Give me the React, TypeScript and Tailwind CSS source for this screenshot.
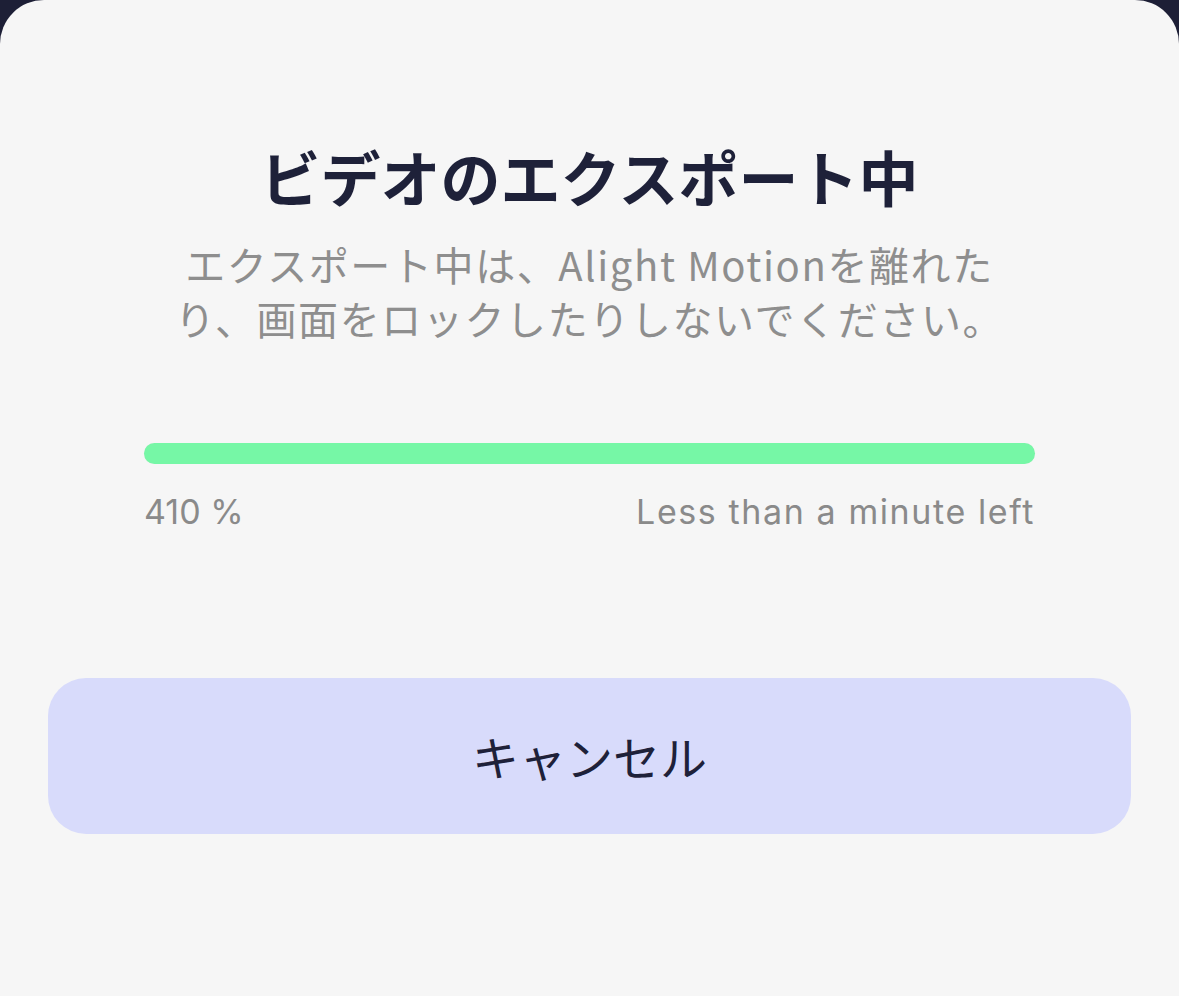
export default function App() {
  const progress = 100;
  return (
    <div className="h-[996px] w-full bg-[#1d1f36]">
      <div className="flex h-full w-full flex-col items-center rounded-t-[44px] bg-[#f6f6f6] pt-[141px] font-['Noto_Sans_CJK_JP',sans-serif]">
        <h1 className="text-[60px] font-bold leading-[70px] text-[#1e2139]">
          ビデオのエクスポート中
        </h1>
        <p className="mt-[26px] text-center text-[40px] leading-[54px] tracking-[1.6px] text-[#8e8e8e]">
          エクスポート中は、Alight Motionを離れた
          <br />
          り、画面をロックしたりしないでください。
        </p>

        <div className="mt-[98px] w-[891px]">
          <div className="h-[21px] w-full rounded-full bg-[#e4e4e4]">
            <div
              className="h-full rounded-full bg-[#76f7a6]"
              style={{ width: `${progress}%` }}
            />
          </div>
          <div className="mt-[28px] flex items-center justify-between font-['Inter',sans-serif] text-[34px] leading-[40px] text-[#8a8a8a]">
            <span>410 %</span>
            <span className="tracking-[1.6px]">Less than a minute left</span>
          </div>
        </div>

        <button className="mt-[146px] flex h-[156px] w-[1083px] items-center justify-center rounded-[38px] bg-[#d8dbfb] text-[47px] text-[#1e2139]">
          キャンセル
        </button>
      </div>
    </div>
  );
}
